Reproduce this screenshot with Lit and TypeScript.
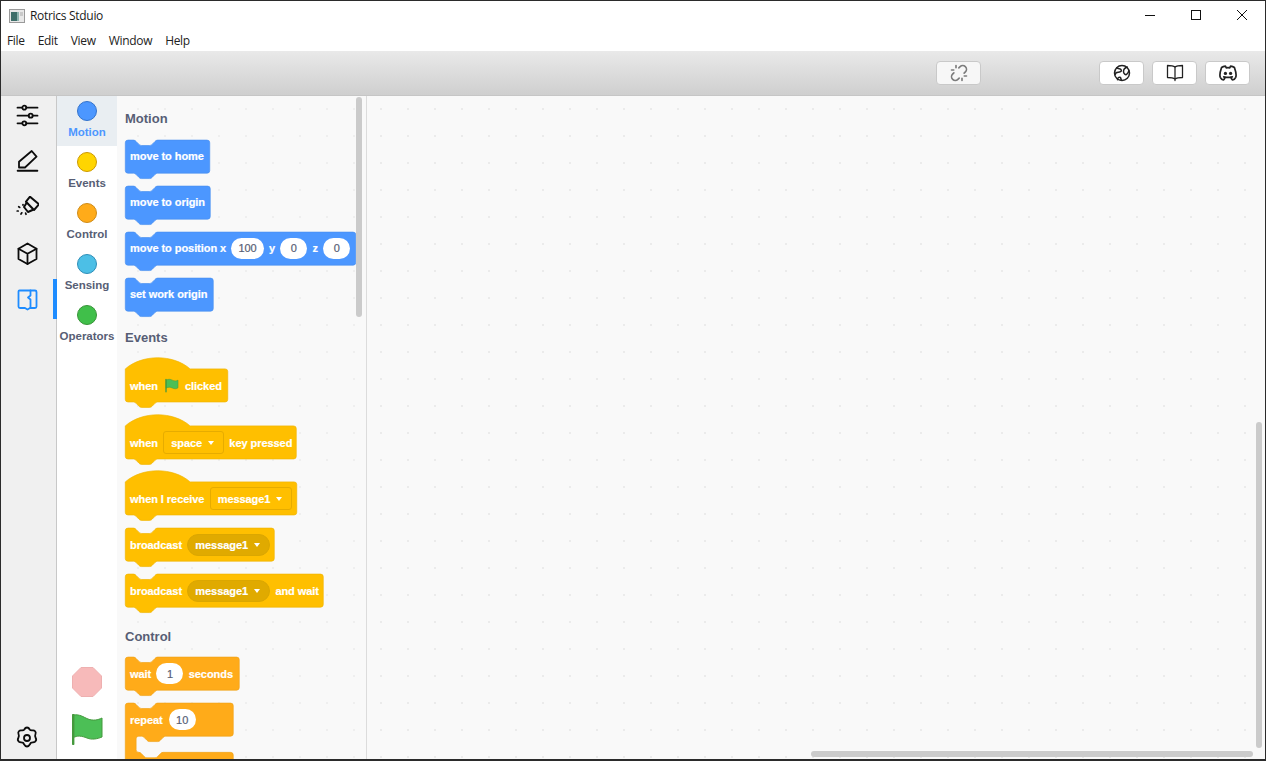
import { LitElement, html, css, svg } from "lit";
import { customElement } from "lit/decorators.js";

const S = 0.675;
const NOTCH_T = "c 2,0 3,1 4,2 l 4,4 c 1,1 2,2 4,2 h 12 c 2,0 3,-1 4,-2 l 4,-4 c 1,-1 2,-2 4,-2";
const NOTCH_B = "c -2,0 -3,1 -4,2 l -4,4 c -1,1 -2,2 -4,2 h -12 c -2,0 -3,-1 -4,-2 l -4,-4 c -1,-1 -2,-2 -4,-2";
const innerW = (w: number) => w / S - 4.8;

function stackPath(w: number) {
  const W = innerW(w);
  return `M 0,4 A 4,4 0 0,1 4,0 H 12 ${NOTCH_T} H ${W} a 4,4 0 0,1 4,4 v 41 a 4,4 0 0,1 -4,4 H 48 ${NOTCH_B} H 4 a 4,4 0 0,1 -4,-4 z`;
}
function hatPath(w: number) {
  const W = innerW(w);
  return `M 0,16 c 25,-22 71,-22 96,0 H ${W} a 4,4 0 0,1 4,4 v 41 a 4,4 0 0,1 -4,4 H 48 ${NOTCH_B} H 4 a 4,4 0 0,1 -4,-4 z`;
}
function cPath(w: number) {
  const W = innerW(w);
  return `M 0,4 A 4,4 0 0,1 4,0 H 12 ${NOTCH_T} H ${W} a 4,4 0 0,1 4,4 v 41 a 4,4 0 0,1 -4,4 H 60 ${NOTCH_B} H 20 a 4,4 0 0,0 -4,4 v 16 a 4,4 0 0,0 4,4 ${NOTCH_T} H ${W} a 4,4 0 0,1 4,4 v 40 H 0 z`;
}

type Part =
  | { t: "text"; v: string }
  | { t: "num"; v: string }
  | { t: "flag" }
  | { t: "square"; v: string }
  | { t: "round"; v: string };

interface Block {
  kind: "stack" | "hat" | "c";
  color: "motion" | "events" | "control";
  w: number;
  parts: Part[];
}
interface Section {
  title: string;
  blocks: Block[];
}

const T = (v: string): Part => ({ t: "text", v });
const N = (v: string): Part => ({ t: "num", v });

const SECTIONS: Section[] = [
  {
    title: "Motion",
    blocks: [
      { kind: "stack", color: "motion", w: 85, parts: [T("move to home")] },
      { kind: "stack", color: "motion", w: 85.5, parts: [T("move to origin")] },
      { kind: "stack", color: "motion", w: 231, parts: [T("move to position x"), N("100"), T("y"), N("0"), T("z"), N("0")] },
      { kind: "stack", color: "motion", w: 88.5, parts: [T("set work origin")] },
    ],
  },
  {
    title: "Events",
    blocks: [
      { kind: "hat", color: "events", w: 103, parts: [T("when"), { t: "flag" }, T("clicked")] },
      { kind: "hat", color: "events", w: 171.5, parts: [T("when"), { t: "square", v: "space" }, T("key pressed")] },
      { kind: "hat", color: "events", w: 172, parts: [T("when I receive"), { t: "square", v: "message1" }] },
      { kind: "stack", color: "events", w: 149.5, parts: [T("broadcast"), { t: "round", v: "message1" }] },
      { kind: "stack", color: "events", w: 198.5, parts: [T("broadcast"), { t: "round", v: "message1" }, T("and wait")] },
    ],
  },
  {
    title: "Control",
    blocks: [
      { kind: "stack", color: "control", w: 114.5, parts: [T("wait"), N("1"), T("seconds")] },
      { kind: "c", color: "control", w: 108.5, parts: [T("repeat"), N("10")] },
    ],
  },
];

const CATS = [
  { name: "Motion", fill: "#4c97ff", line: "#3373cc", sel: true },
  { name: "Events", fill: "#ffd500", line: "#cc9900", sel: false },
  { name: "Control", fill: "#ffab19", line: "#cf8b17", sel: false },
  { name: "Sensing", fill: "#4cbfe6", line: "#2e8eb8", sel: false },
  { name: "Operators", fill: "#40bf4a", line: "#389438", sel: false },
];

const ic = (body: unknown) => html`<svg class="ic" viewBox="0 0 24 24" fill="none" stroke="currentColor" stroke-width="1.8" stroke-linecap="round" stroke-linejoin="round">${body}</svg>`;

const flagPath = "M1.5 2.5 C5 0.5 8 1 11 2.5 C14 4 17 4 19.5 2.5 L19.5 14 C17 15.8 14 15.8 11 14.3 C8 12.8 5 12.5 1.5 14.5 Z";

@customElement("app-root")
export class AppRoot extends LitElement {
  static styles = css`
    :host {
      display: flex;
      flex-direction: column;
      width: 1266px;
      height: 761px;
      box-sizing: border-box;
      overflow: hidden;
      background: #fff;
      border-top: 1px solid #2b2b2b;
      border-left: 1px solid #2b2b2b;
      border-right: 1px solid #2b2b2b;
      border-bottom: 2px solid #2b2b2b;
      font-family: "Open Sans", "Noto Sans", sans-serif;
      color: #1a1a1a;
    }
    .title {
      flex: none;
      height: 29px;
      display: flex;
      align-items: center;
      padding-left: 8px;
      font-size: 12px;
      background: #fff;
    }
    .title .name { margin-left: 5px; margin-top: -1px; letter-spacing: -0.3px; }
    .spacer { flex: 1; }
    .winctl { display: flex; align-items: center; margin-top: -2px; }
    .winctl svg { display: block; width: 46px; height: 12px; }
    .menu {
      flex: none;
      height: 21px;
      display: flex;
      align-items: center;
      gap: 13px;
      padding-left: 6px;
      padding-bottom: 1px;
      box-sizing: border-box;
      font-size: 12px;
      color: #222;
      background: #fff;
    }
    .menu span { letter-spacing: -0.32px; }
    .toolbar {
      flex: none;
      height: 45px;
      box-sizing: border-box;
      display: flex;
      align-items: center;
      justify-content: flex-end;
      gap: 8px;
      padding-right: 15px;
      padding-bottom: 1px;
      background: linear-gradient(#e9e9e9, #cfcfcf);
      border-bottom: 1px solid #c6c6c6;
    }
    .tbtn {
      width: 45px;
      height: 24px;
      box-sizing: border-box;
      border: 1px solid #c9c9c9;
      border-radius: 4px;
      background: #fff;
      display: flex;
      align-items: center;
      justify-content: center;
      color: #222;
    }
    .tbtn.off { margin-right: 110px; background: #f7f7f7; color: #7c7c7c; }
    .tbtn svg { width: 18px; height: 18px; display: block; }
    .main { flex: 1; min-height: 0; display: flex; }
    .rail {
      flex: none;
      width: 56px;
      box-sizing: border-box;
      background: #f0f0f0;
      border-right: 1px solid #c8c8c8;
      display: flex;
      flex-direction: column;
      align-items: stretch;
      color: #0c0c0c;
      position: relative;
    }
    .rail .it {
      height: 46px;
      box-sizing: border-box;
      flex: none;
      display: flex;
      align-items: flex-start;
      padding: 8px 0 0 14px;
      position: relative;
    }
    .rail svg.ic { width: 24px; height: 24px; display: block; }
    .rail .it.active { color: #1e8cff; }
    .rail .it.active::after {
      content: "";
      position: absolute;
      right: -1px;
      top: -1px;
      width: 4px;
      height: 40px;
      background: #1e8cff;
    }
    .rail .it.gear { margin-top: auto; padding-top: 13px; }
    .cats {
      flex: none;
      width: 60px;
      box-sizing: border-box;
      background: #fff;
      display: flex;
      flex-direction: column;
      font-family: "Liberation Sans", Arial, sans-serif;
    }
    .cat {
      height: 51px;
      flex: none;
      display: flex;
      flex-direction: column;
      align-items: center;
      padding-top: 5px;
      box-sizing: border-box;
      font-size: 11.5px;
      font-weight: 700;
      color: #575e75;
      white-space: nowrap;
    }
    .cat.sel { background: #e9eef2; color: #4c97ff; height: 50px; margin-bottom: 1px; }
    .dot {
      width: 20px;
      height: 20px;
      box-sizing: border-box;
      border-radius: 50%;
      border: 1px solid;
      margin-bottom: 5px;
      flex: none;
    }
    .run {
      margin-top: auto;
      display: flex;
      flex-direction: column;
      align-items: center;
      gap: 17px;
      padding-bottom: 14px;
    }
    .run svg { display: block; }
    .flyout {
      flex: none;
      width: 250px;
      box-sizing: border-box;
      background-color: #f9f9f9;
      background-image: radial-gradient(circle at 1px 1px, #efefef 1px, transparent 1.4px);
      background-size: 27px 27px;
      background-position: 20px 12px;
      border-right: 1px solid #dcdcdc;
      padding-left: 8px;
      padding-top: 14.6px;
      position: relative;
      overflow: hidden;
      font-family: "Liberation Sans", Arial, sans-serif;
    }
    .sec-title {
      font-size: 13px;
      font-weight: 700;
      color: #575e75;
      line-height: 15px;
      height: 15px;
      margin-bottom: 1px;
      white-space: nowrap;
    }
    .sec { display: flex; flex-direction: column; gap: 13px; }
    .sec + .sec { margin-top: 19.9px; }
    .sec + .sec .sec-title { margin-bottom: 0; }
    .sec:nth-of-type(3) { margin-top: 21.7px; }
    .block {
      position: relative;
      height: 33px;
      flex: none;
    }
    .block.hat { margin-top: 11px; }
    .block.hat:nth-child(4) { margin-top: 10px; }
    .block svg.shape {
      position: absolute;
      left: 0;
      top: -11px;
      overflow: visible;
      display: block;
    }
    .row {
      position: relative;
      display: flex;
      align-items: center;
      gap: 5.3px;
      height: 33px;
      padding-left: 5px;
      font-size: 11px;
      font-weight: 700;
      letter-spacing: -0.06px;
      color: #fff;
      white-space: nowrap;
      -webkit-text-stroke: 0.2px #fff;
    }
    .block.c .row { gap: 6px; }
    .num {
      height: 21px;
      min-width: 27px;
      padding: 0 7px;
      box-sizing: border-box;
      border-radius: 11px;
      background: #fff;
      color: #575e75;
      font-weight: 400;
      -webkit-text-stroke: 0.2px #575e75;
      display: flex;
      align-items: center;
      justify-content: center;
    }
    .sq {
      height: 23px;
      box-sizing: border-box;
      border: 1px solid #e6ac00;
      border-radius: 3px;
      display: flex;
      align-items: center;
      gap: 5.5px;
      padding: 0 9.5px 0 7px;
    }
    .rd {
      height: 22px;
      box-sizing: border-box;
      border-radius: 11px;
      background: #e0aa00;
      border: 1px solid #dba700;
      display: flex;
      align-items: center;
      gap: 5.5px;
      padding: 0 9.5px 0 7px;
    }
    .caret {
      width: 0;
      height: 0;
      border-left: 3.5px solid transparent;
      border-right: 3.5px solid transparent;
      border-top: 4px solid #fff;
      flex: none;
    }
    .flag { width: 14px; height: 15px; display: block; margin: 0 0.5px 0 2px; flex: none; }
    .sb {
      position: absolute;
      background: #cbcbcb;
      border-radius: 3px;
    }
    .sb.fly { left: 239px; top: 1px; width: 6px; height: 220px; }
    .work {
      flex: 1;
      min-width: 0;
      position: relative;
      background-color: #f9f9f9;
      background-image: radial-gradient(circle at 1px 1px, #ebebeb 1px, transparent 1.4px);
      background-size: 27px 27px;
      background-position: 13px 12px;
      overflow: hidden;
      border-top-right-radius: 2px;
    }
    .sb.v { right: 3px; top: 326px; width: 6px; height: 326px; }
    .sb.h { left: 444px; bottom: 2px; width: 442px; height: 6px; }
  `;

  private renderPart(p: Part) {
    switch (p.t) {
      case "text":
        return html`<span>${p.v}</span>`;
      case "num":
        return html`<span class="num">${p.v}</span>`;
      case "flag":
        return html`<svg class="flag" viewBox="0 0 21 21"><path d=${flagPath} fill="#4cbf56" stroke="#45993d" stroke-width="0.8"></path><path d="M1.5 1.5 V20" stroke="#45993d" stroke-width="2" stroke-linecap="round"></path></svg>`;
      case "square":
        return html`<span class="sq">${p.v}<i class="caret"></i></span>`;
      case "round":
        return html`<span class="rd">${p.v}<i class="caret"></i></span>`;
    }
  }

  private renderBlock(b: Block) {
    const fills = {
      motion: ["#4c97ff", "#4a90f0"],
      events: ["#ffbf00", "#f0b400"],
      control: ["#ffab19", "#f0a218"],
    }[b.color];
    const d = b.kind === "hat" ? hatPath(b.w) : b.kind === "c" ? cPath(b.w) : stackPath(b.w);
    const yoff = b.kind === "hat" ? 0 : 11;
    return html`<div class="block ${b.kind}" style="width:${b.w}px">
      <svg class="shape" width=${b.w} height="100">
        ${svg`<g transform="translate(0.3 ${yoff + 0.1}) scale(${S})"><path d=${d} fill=${fills[0]} stroke=${fills[1]} stroke-width="1"></path></g>`}
      </svg>
      <div class="row">${b.parts.map((p) => this.renderPart(p))}</div>
    </div>`;
  }

  render() {
    return html`
      <div class="title">
        <svg width="16" height="14" viewBox="0 0 16 14"><rect x="0.5" y="0.5" width="15" height="13" fill="#e8e8e8" stroke="#9a9a9a"></rect><rect x="2" y="3" width="6" height="9" fill="#3f6f6a"></rect><rect x="8" y="3" width="2" height="9" fill="#8fb5b0"></rect><rect x="11" y="3" width="3" height="4" fill="#c9c9c9"></rect></svg>
        <span class="name">Rotrics Stduio</span>
        <span class="spacer"></span>
        <div class="winctl">
          <svg viewBox="0 0 46 12"><path d="M18 6.500 H28" stroke="#111" fill="none"></path></svg>
          <svg viewBox="0 0 46 12"><rect x="18.500" y="1.500" width="9" height="9" stroke="#111" fill="none"></rect></svg>
          <svg viewBox="0 0 46 12"><path d="M18 1 L28 11 M28 1 L18 11" stroke="#111" fill="none"></path></svg>
        </div>
      </div>
      <div class="menu">
        <span>File</span><span>Edit</span><span>View</span><span>Window</span><span>Help</span>
      </div>
      <div class="toolbar">
        <div class="tbtn off"><svg viewBox="0 0 24 24" fill="none" stroke="currentColor" stroke-width="2.200" stroke-linecap="round" stroke-linejoin="round"><path d="m18.840 12.250 1.720-1.710a5 5 0 0 0-.120-7.070 5 5 0 0 0-6.950 0l-1.720 1.710"></path><path d="m5.170 11.750-1.710 1.710a5 5 0 0 0 .120 7.070 5 5 0 0 0 6.950 0l1.710-1.710"></path><path d="M8 2v3M2 8h3M16 19v3M19 16h3"></path></svg></div>
        <div class="tbtn"><svg viewBox="0 0 24 24" fill="none" stroke="currentColor" stroke-width="2" stroke-linecap="round" stroke-linejoin="round"><circle cx="12" cy="12" r="10"></circle><path d="M5 5c2 2 5 1 6 3s-2 3-4 3-4 1-4 3M19 4c-3 1-5 3-5 6s3 5 4 4 3-3 3-5M6 21c0-3 2-4 4-3l1 3"></path></svg></div>
        <div class="tbtn"><svg viewBox="0 0 24 24" fill="none" stroke="currentColor" stroke-width="1.700" stroke-linecap="round" stroke-linejoin="round"><path d="M12 4c-2-1.500-5-2-10-2v16c5 0 8 .5 10 2 2-1.500 5-2 10-2V2c-5 0-8 .5-10 2z"></path><path d="M12 4v18"></path></svg></div>
        <div class="tbtn"><svg viewBox="1.500 1.500 21 21" fill="none" stroke="currentColor" stroke-width="2" stroke-linecap="round" stroke-linejoin="round"><circle cx="9" cy="12.500" r="1.900" fill="currentColor" stroke="none"></circle><circle cx="15" cy="12.500" r="1.900" fill="currentColor" stroke="none"></circle><path d="M15.500 17c0 1 1.500 3 2 3c1.500 0 2.833-1.667 3.500-3c.667-1.667.5-5.833-1.500-11.500c-1.457-1.015-3-1.340-4.500-1.500l-.972 1.923a11.913 11.913 0 0 0-4.053 0l-.975-1.923c-1.500.160-3.043.485-4.500 1.500c-2 5.667-2.167 9.833-1.500 11.500c.667 1.333 2 3 3.500 3c.5 0 2-2 2-3"></path><path d="M7 16.500c3.500 1 6.500 1 10 0"></path></svg></div>
      </div>
      <div class="main">
        <div class="rail">
          <div class="it">${ic(svg`<path d="M2.500 3.700H7.300M11.300 3.700H22.500M2.500 11.700H13.700M17.700 11.700H22.500M2.500 19.300H7.300M11.300 19.300H22.500"></path><circle cx="9.300" cy="3.700" r="2"></circle><circle cx="15.700" cy="11.700" r="2"></circle><circle cx="9.300" cy="19.300" r="2"></circle>`)}</div>
          <div class="it">${ic(svg`<path d="M4 17.500 V11.700 L16.700 1 L21.500 6.700 L10 17.500 Z"></path><path d="M2.700 20.800 H22.300" stroke-width="2"></path>`)}</div>
          <div class="it">${ic(svg`<path d="M15 .7 L24 8.300 L19 14 L11 5.700 Z" stroke-width="2"></path><path d="M11.500 7 L9 11 L13 16 L17.500 14" stroke-width="2"></path><path d="M3.700 10.700l1 .7M8 8.500v.6M2.200 15h1M6 18l.8-1.200M11 18.300l-.4-1.200" stroke-width="1.700"></path>`)}</div>
          <div class="it">${ic(svg`<path d="M12.500 1.500 L21.500 6.700 V17 L12.500 22 L3.500 17 V6.700 Z"></path><path d="M3.500 6.700 L12.500 11.800 L21.500 6.700 M12.500 11.800 V22"></path>`)}</div>
          <div class="it active">${ic(svg`<path d="M4.500 2.500 H20 a1.500 1.500 0 0 1 1.500 1.500 V18.500 a1.500 1.500 0 0 1 -1.500 1.500 H15 L12.500 21.500 L10 20 H5 a1.500 1.500 0 0 1 -1.500 -1.500 V3.500 A1 1 0 0 1 4.500 2.500 Z"></path><path d="M15.500 2.500 V7.500 L13 9.500 L15.500 11.500 V20"></path>`)}</div>
          <div class="it gear">${ic(svg`<circle cx="12" cy="12" r="3"></circle><path d="M12 1.500 c1.500 0 2.200 1 2.700 2 c.7 1.200 2 1 3.300.8 c1.500-.2 3.200 1.800 2.600 3.200 c-.5 1.200-.8 2.900 0 4.300 c.8 1.400.5 3.200-.6 4 c-1.200.8-3 .2-4 1 c-1 .8-1.400 3.700-4 3.700 c-2.600 0-3-2.900-4-3.700 c-1-.8-2.800-.2-4-1 c-1.100-.8-1.400-2.600-.6-4 c.8-1.400.5-3.100 0-4.300 c-.6-1.400 1.100-3.400 2.600-3.200 c1.300.2 2.600.4 3.300-.8 C9.800 2.500 10.500 1.500 12 1.500 Z"></path>`)}</div>
        </div>
        <div class="cats">
          ${CATS.map(
            (c) => html`<div class="cat ${c.sel ? "sel" : ""}">
              <span class="dot" style="background:${c.fill};border-color:${c.line}"></span>${c.name}
            </div>`
          )}
          <div class="run">
            <svg width="30" height="30" viewBox="0 0 30 30"><path d="M9 .5 H21 L29.500 9 V21 L21 29.500 H9 L.5 21 V9 Z" fill="#f7baba" stroke="#eeb0b0"></path></svg>
            <svg width="31" height="31" viewBox="0 0 31 31"><path d="M1 1 C8 0 11 3 16 5 C21 7 26 6 30 4 V23 C25 25 20 26 15 24 C10 22 5 21 1 24 Z" fill="#4cbf56" stroke="#45993d"></path><path d="M1.200 1 V30" stroke="#45993d" stroke-width="2.400" stroke-linecap="round"></path></svg>
          </div>
        </div>
        <div class="flyout">
          ${SECTIONS.map(
            (s) => html`<div class="sec">
              <div class="sec-title">${s.title}</div>
              ${s.blocks.map((b) => this.renderBlock(b))}
            </div>`
          )}
          <div class="sb fly"></div>
        </div>
        <div class="work">
          <div class="sb v"></div>
          <div class="sb h"></div>
        </div>
      </div>
    `;
  }
}
